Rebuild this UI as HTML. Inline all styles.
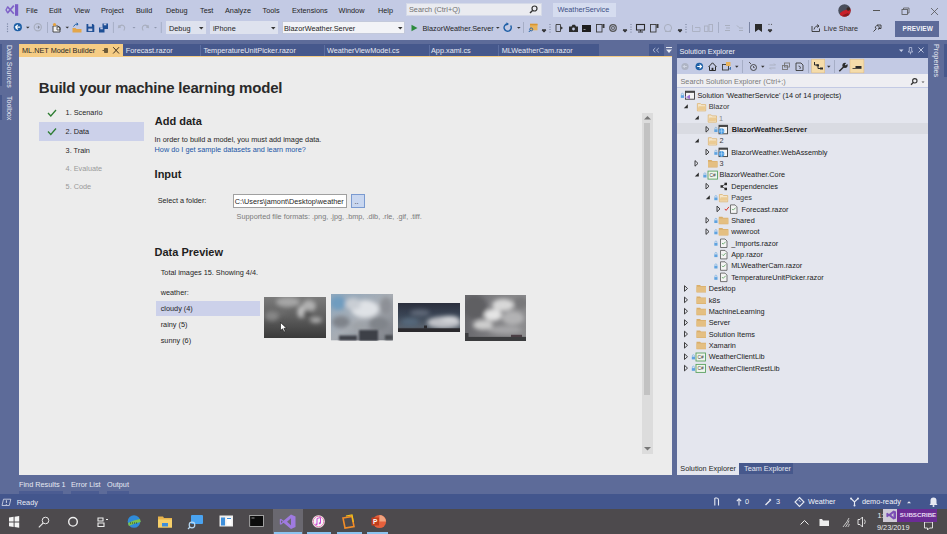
<!DOCTYPE html>
<html><head><meta charset="utf-8">
<style>
*{box-sizing:border-box}
html,body{margin:0;padding:0}
body{width:947px;height:534px;overflow:hidden;position:relative;background:#5D6B99;font-family:"Liberation Sans",sans-serif;color:#1e1e1e}
.a{position:absolute}
.t{position:absolute;white-space:nowrap;line-height:1}
.m{font-size:7.6px;color:#1e1e1e}
.mn{font-size:7.3px;color:#1e1e1e}
.u{font-size:7.3px;color:#262626}
#top{left:0;top:0;width:947px;height:40px;background:#C3CAE4}
#doc{left:19px;top:57px;width:653px;height:418px;background:#ECECEC}
#se{left:677px;top:44px;width:251px;height:418.6px;background:#E4E6EE}
#status{left:0;top:494px;width:947px;height:15px;background:#43568D}
#task{left:0;top:509px;width:947px;height:25px;background:#4D4A4D}
</style></head>
<body>
<!-- TOP BAR -->
<div id="top" class="a"></div>
<!-- VS logo -->
<svg class="a" style="left:0;top:0" width="22" height="20" viewBox="0 0 22 20">
<rect x="15" y="4.2" width="3.2" height="11.6" fill="#7A5CC6"/>
<path d="M7.3 6.5 L13.8 13.8 M7.3 13.2 L13.8 5.6" stroke="#7F62C8" stroke-width="1.7"/>
<path d="M7.6 7.2 L6 9.9 L7.6 12.6" fill="none" stroke="#7F62C8" stroke-width="1.3"/>
</svg>
<div class="t mn" style="left:26px;top:7.2px">File</div>
<div class="t mn" style="left:49px;top:7.2px">Edit</div>
<div class="t mn" style="left:74px;top:7.2px">View</div>
<div class="t mn" style="left:101px;top:7.2px">Project</div>
<div class="t mn" style="left:136px;top:7.2px">Build</div>
<div class="t mn" style="left:166px;top:7.2px">Debug</div>
<div class="t mn" style="left:200px;top:7.2px">Test</div>
<div class="t mn" style="left:225px;top:7.2px">Analyze</div>
<div class="t mn" style="left:262.5px;top:7.2px">Tools</div>
<div class="t mn" style="left:292px;top:7.2px">Extensions</div>
<div class="t mn" style="left:338.5px;top:7.2px">Window</div>
<div class="t mn" style="left:378px;top:7.2px">Help</div>
<!-- search -->
<div class="a" style="left:406px;top:3px;width:136px;height:13px;background:#EAEBF0;border:1px solid #D5DAE8"></div>
<div class="t mn" style="left:409px;top:6.4px;color:#717171">Search (Ctrl+Q)</div>
<svg class="a" style="left:529px;top:5px" width="9" height="9" viewBox="0 0 9 9"><circle cx="5.5" cy="3.5" r="2.5" fill="none" stroke="#333" stroke-width="1.2"/><path d="M3.8 5.2 L1 8" stroke="#333" stroke-width="1.4"/></svg>
<div class="a" style="left:553px;top:3px;width:63px;height:14px;background:#D5DCEF"></div>
<div class="t mn" style="left:557.5px;top:6.4px;color:#3D4F85">WeatherService</div>
<!-- avatar -->
<svg class="a" style="left:838px;top:3.5px" width="13" height="13" viewBox="0 0 13 13"><defs><clipPath id="av"><circle cx="6.5" cy="6.5" r="6.2"/></clipPath></defs>
<g clip-path="url(#av)"><rect width="13" height="13" fill="#4a4f5c"/><path d="M2 9 q3-3 7-3.5 q2-1.5 4-1 v9 h-11z" fill="#C8202A"/><circle cx="10.3" cy="5" r="1.8" fill="#3a2a25"/><path d="M4 12 q3 -2 6 -3 l3 4z" fill="#8a1a1f"/></g></svg>
<div class="a" style="left:873px;top:10px;width:7px;height:0.8px;background:#555"></div>
<svg class="a" style="left:901px;top:7px" width="9" height="9" viewBox="0 0 9 9"><rect x="1" y="2.5" width="5.5" height="5" fill="none" stroke="#555" stroke-width=".8"/><path d="M2.5 2.5 V1 H8 V6 H6.5" fill="none" stroke="#555" stroke-width=".8"/></svg>
<svg class="a" style="left:931px;top:8px" width="7" height="7" viewBox="0 0 7 7"><path d="M0 0L7 7M7 0L0 7" stroke="#555" stroke-width="0.8"/></svg>


<!-- TOOLBAR -->
<svg class="a" style="left:0;top:17px" width="947" height="23" viewBox="0 17 947 23">
<g fill="#7F8AA8"><circle cx="7.5" cy="24" r=".7"/><circle cx="7.5" cy="26.5" r=".7"/><circle cx="7.5" cy="29" r=".7"/><circle cx="7.5" cy="31.5" r=".7"/></g>
<circle cx="17.8" cy="27.2" r="4.1" fill="#1E5FA6"/><path d="M15.3 27.2 L17.8 24.9 M15.3 27.2 L17.8 29.5 M15.5 27.2 H20.2" stroke="#fff" stroke-width="1.2"/>
<path d="M26 26.7 H29.6 L27.8 28.6Z" fill="#333"/>
<circle cx="37.8" cy="27.2" r="3.6" fill="none" stroke="#A9AFBF" stroke-width="1.2"/><path d="M36 27.2 H39.5 M38.2 25.7 L39.7 27.2 L38.2 28.7" stroke="#A9AFBF" stroke-width="1"/>
<path d="M47.5 22 V33" stroke="#A6AEC6" stroke-width="1"/>
<path d="M53 26 h5 l2 2 v4 h-7z" fill="#f4f4f4" stroke="#3a3a3a" stroke-width=".9"/><circle cx="54.5" cy="24.5" r="1.6" fill="#E8A33D"/><path d="M57 27 h3 v3 h-3z" fill="none" stroke="#3a3a3a" stroke-width=".8"/>
<path d="M65.5 26.7 H69 L67.25 28.6Z" fill="#333"/>
<path d="M72.5 28 h3 l1 1 h5 v3.5 h-9z" fill="#E3A64A"/><path d="M73.5 26.5 q1.5-3 4.5-2.5 M76.5 23 l1.5 1 -1 1.5" stroke="#1E5FA6" stroke-width="1" fill="none"/>
<path d="M86.5 24 h6.5 l1.3 1.3 v6.7 h-7.8z" fill="#1E4F95"/><rect x="88.3" y="24" width="3.6" height="2.6" fill="#C3CAE4"/><rect x="88.3" y="28.6" width="4" height="2.5" fill="#C3CAE4"/>
<path d="M99 27.5 h5.5 v5 h-5.5z" fill="#1E4F95"/><path d="M102.5 23.5 h5.5 v5.5 h-5.5z" fill="#1E4F95"/><rect x="103.8" y="23.5" width="2.5" height="1.8" fill="#C3CAE4"/><rect x="100.3" y="27.5" width="2.5" height="1.8" fill="#C3CAE4"/>
<path d="M113.4 22 V33" stroke="#A6AEC6" stroke-width="1"/>
<path d="M119 25 l-0.5 2.5 l2.3 -0.4 M118.8 27.3 q2-3 4.5-1.8 q2.5 1.8 0.5 5" stroke="#A9AFBF" stroke-width="1.1" fill="none"/>
<path d="M132.5 26.9 H135.5 L134 28.5Z" fill="#8F97AD"/>
<path d="M148 25 l0.5 2.5 l-2.3 -0.4 M148.2 27.3 q-2-3 -4.5-1.8 q-2.5 1.8 -0.5 5" stroke="#A9AFBF" stroke-width="1.1" fill="none"/>
<path d="M154 26.9 H157 L155.5 28.5Z" fill="#8F97AD"/>
<path d="M161.3 22 V33" stroke="#A6AEC6" stroke-width="1"/>
<path d="M411.5 24.7 L417.5 28 L411.5 31.3Z" fill="#2C8A3E"/>
<path d="M496 26.9 H499.6 L497.8 28.7Z" fill="#333"/>
<path d="M510.6 25.5 A3.6 3.6 0 1 1 507.3 24" fill="none" stroke="#1E5FA6" stroke-width="1.4"/><path d="M506.5 22.2 L509 24 L506.5 25.8Z" fill="#1E5FA6"/>
<path d="M517 26.9 H520.6 L518.8 28.7Z" fill="#333"/>
<path d="M523.5 22 V33" stroke="#A6AEC6" stroke-width="1"/>
<rect x="530" y="23.8" width="7.5" height="6.5" fill="#E8B25A"/><rect x="530" y="23.8" width="7.5" height="1.5" fill="#D89530"/><circle cx="531.2" cy="29.4" r="1.5" fill="none" stroke="#1E5FA6" stroke-width=".9"/><path d="M530.3 30.4 L528.8 32" stroke="#1E5FA6" stroke-width="1"/>
<path d="M542 29.5 h4 M542 30.2 H546 L544 32.2Z" stroke="#222" stroke-width=".6" fill="#222"/>
<g fill="#6A738C"><circle cx="550" cy="24.5" r=".6"/><circle cx="550" cy="27" r=".6"/><circle cx="550" cy="29.5" r=".6"/><circle cx="550" cy="32" r=".6"/></g>
<path d="M556 24.5 h4.5 v7 h-4.5z" fill="none" stroke="#3a3a3a" stroke-width=".9"/><path d="M560.5 26 l2.5 2 -2.5 2z" fill="#3a3a3a"/>
<path d="M569 26.5 h2.5 l1-1.8 h2.5 l1 1.8 h2 v5.5 h-9z" fill="#2b2b2b"/><circle cx="573.5" cy="29" r="1.4" fill="#C3CAE4"/>
<rect x="582" y="25" width="9" height="7" fill="#1e1e1e"/><path d="M583.5 29.5 h2" stroke="#ddd" stroke-width=".6"/>
<rect x="596.5" y="24.5" width="5.5" height="7.5" fill="none" stroke="#3a3a3a" stroke-width=".9"/><rect x="602.5" y="24" width="2" height="4" fill="#3a3a3a"/>
<circle cx="613" cy="28" r="3.9" fill="#555"/><circle cx="613" cy="28" r="2.4" fill="none" stroke="#C3CAE4" stroke-width=".8"/><circle cx="613" cy="28" r=".9" fill="#C3CAE4"/>
<path d="M623 29.5 h4 M623 30.2 H627 L625 32.2Z" stroke="#222" stroke-width=".6" fill="#222"/>
<g fill="#6A738C"><circle cx="631" cy="24.5" r=".6"/><circle cx="631" cy="27" r=".6"/><circle cx="631" cy="29.5" r=".6"/><circle cx="631" cy="32" r=".6"/></g>
<rect x="636.5" y="24.5" width="8" height="5.5" fill="none" stroke="#2b2b2b" stroke-width="1.1"/><path d="M640.5 30 v1.5 M638 32 h5" stroke="#2b2b2b" stroke-width="1"/>
<rect x="650.5" y="24.5" width="5.5" height="7.5" fill="none" stroke="#3a3a3a" stroke-width=".9"/><rect x="656.5" y="24" width="2" height="4" fill="#3a3a3a"/>
<circle cx="668" cy="28" r="3.6" fill="none" stroke="#A9AFBF" stroke-width="1"/><path d="M665 31.5 h6" stroke="#A9AFBF" stroke-width="1"/>
<path d="M678 29.5 h4 M678 30.2 H682 L680 32.2Z" stroke="#222" stroke-width=".6" fill="#222"/>
<g fill="#6A738C"><circle cx="686" cy="24.5" r=".6"/><circle cx="686" cy="27" r=".6"/><circle cx="686" cy="29.5" r=".6"/><circle cx="686" cy="32" r=".6"/></g>
<path d="M692.5 25 v6.5 h7.5 v-4 h-5" fill="none" stroke="#A9AFBF" stroke-width=".9"/>
<rect x="704.5" y="26" width="3.5" height="5.5" fill="none" stroke="#A9AFBF" stroke-width=".9"/><rect x="709" y="24.5" width="3.5" height="7" fill="none" stroke="#A9AFBF" stroke-width=".9"/>
<path d="M718.5 22 V33" stroke="#A6AEC6" stroke-width="1"/>
<path d="M725 25.5 h5 M726 28 h4 M725 30.5 h5" stroke="#A9AFBF" stroke-width="1"/>
<path d="M737 25.5 l2 2 M739 28 h4 M739 30.5 h4" stroke="#A9AFBF" stroke-width="1"/>
<path d="M749.5 22 V33" stroke="#7A84A3" stroke-width="1"/>
<path d="M755 24 h7 v8 l-3.5 -2.5 -3.5 2.5z" fill="#2b2b2b"/>
<g fill="#555"><circle cx="769" cy="24.3" r=".6"/><circle cx="771.5" cy="24.3" r=".6"/></g>
<path d="M768 29.5 h4 M768 30.2 H772 L770 32.2Z" stroke="#222" stroke-width=".6" fill="#222"/>
<path d="M812 26 v5.5 h7.5 v-3" fill="none" stroke="#333" stroke-width=".9"/><path d="M814 29.5 q1-4 4.5-3.5 M817 24.5 l2 1.5 -1.8 1.6" fill="none" stroke="#333" stroke-width=".9"/>
<path d="M873.5 31.5 l3-3 M875.5 28.5 a2 2 0 1 1 2.5 1 M877 25 h4 v3.5 h-2.5" fill="none" stroke="#333" stroke-width=".9"/>
</svg>
<div class="t mn" style="left:422.5px;top:25.1px">BlazorWeather.Server</div>
<div class="t mn" style="left:823.7px;top:25px;font-size:7.2px;color:#2e2e2e">Live Share</div>
<div class="a" style="left:895px;top:21px;width:44px;height:15.5px;background:#5D6B99"></div>
<div class="t" style="left:902.5px;top:25.6px;font-size:6.5px;font-weight:bold;color:#F2F4FA;letter-spacing:0.05px">PREVIEW</div>

<div class="a" style="left:166px;top:21.4px;width:40px;height:13px;background:#DEE2EE"></div>
<div class="t mn" style="left:169px;top:25.1px">Debug</div>
<svg class="a" style="left:199px;top:27px" width="5" height="3"><path d="M0 0H4.5L2.25 2.5Z" fill="#333"/></svg>
<div class="a" style="left:210px;top:21.4px;width:68px;height:13px;background:#DEE2EE"></div>
<div class="t mn" style="left:213px;top:25.1px">iPhone</div>
<svg class="a" style="left:271px;top:27px" width="5" height="3"><path d="M0 0H4.5L2.25 2.5Z" fill="#333"/></svg>
<div class="a" style="left:282px;top:21.4px;width:123px;height:13px;background:#F2F3F7;border:1px solid #C3C9DB"></div>
<div class="t mn" style="left:284px;top:25.1px">BlazorWeather.Server</div>
<svg class="a" style="left:398px;top:27px" width="5" height="3"><path d="M0 0H4.5L2.25 2.5Z" fill="#333"/></svg>

<!-- TAB WELL -->
<div class="a" style="left:19px;top:44px;width:580px;height:12px;background:#46588C"></div>
<div class="a" style="left:19px;top:44px;width:104px;height:12px;background:#F5CC84"></div>
<div class="a" style="left:19px;top:56px;width:653px;height:1px;background:#F5CC84"></div>
<div class="t u" style="left:22px;top:47.1px">ML.NET Model Builder</div>
<svg class="a" style="left:100px;top:46px" width="20" height="9" viewBox="0 0 20 9"><path d="M2.5 4.5 h2 M4.5 2.5 h3 v4 h-3z" stroke="#6B5A3A" stroke-width="1" fill="#6B5A3A"/><path d="M13.2 1.2 L19 7.5 M19 1.2 L13.2 7.5" stroke="#3D3020" stroke-width="1"/></svg>
<div class="a" style="left:200px;top:45px;width:1px;height:11px;background:#5C6EA0"></div>
<div class="a" style="left:324px;top:45px;width:1px;height:11px;background:#5C6EA0"></div>
<div class="a" style="left:429px;top:45px;width:1px;height:11px;background:#5C6EA0"></div>
<div class="a" style="left:497.5px;top:45px;width:1px;height:11px;background:#5C6EA0"></div>
<div class="t u" style="left:125.7px;top:47.1px;color:#E6E9F2">Forecast.razor</div>
<div class="t u" style="left:203.4px;top:47.1px;color:#E6E9F2">TemperatureUnitPicker.razor</div>
<div class="t u" style="left:327px;top:47.1px;color:#E6E9F2">WeatherViewModel.cs</div>
<div class="t u" style="left:431px;top:47.1px;color:#E6E9F2">App.xaml.cs</div>
<div class="t u" style="left:501.7px;top:47.1px;color:#E6E9F2">MLWeatherCam.razor</div>
<div class="a" style="left:649px;top:44px;width:15px;height:12px;background:#46588C"></div>
<svg class="a" style="left:649px;top:44px" width="15" height="12" viewBox="0 0 15 12"><path d="M6.3 4 L4 6.2 L6.3 8.4 M9.8 4 L7.5 6.2 L9.8 8.4" fill="none" stroke="#C8D0E8" stroke-width=".8"/></svg>
<svg class="a" style="left:666px;top:47px" width="6" height="7" viewBox="0 0 6 7"><path d="M0 0.5 h6" stroke="#E6E9F2" stroke-width="1"/><path d="M0 2.5 H6 L3 6Z" fill="#E6E9F2"/></svg>

<!-- LEFT BAR -->
<div class="a" style="left:0;top:44px;width:2px;height:42px;background:#46588C"></div>
<div class="a" style="left:0;top:95px;width:2px;height:25px;background:#46588C"></div>
<div class="t u" style="left:12.8px;top:44.5px;font-size:7.05px;color:#E6E9F2;transform:rotate(90deg);transform-origin:0 0">Data Sources</div>
<div class="t u" style="left:12.8px;top:96.2px;font-size:7.05px;color:#E6E9F2;transform:rotate(90deg);transform-origin:0 0">Toolbox</div>

<!-- DOCUMENT -->
<div id="doc" class="a"></div>
<div class="t" style="left:38.8px;top:79.8px;font-size:15px;font-weight:bold;letter-spacing:-0.2px;color:#2a2a2a">Build your machine learning model</div>
<div class="a" style="left:39px;top:122px;width:105px;height:18.6px;background:#CCD1EA"></div>
<svg class="a" style="left:47px;top:108px" width="10" height="30" viewBox="0 0 10 30"><path d="M1 5 L3.8 8 L9 2" fill="none" stroke="#2E7D32" stroke-width="1.3"/><path d="M1 23.5 L3.8 26.5 L9 20.5" fill="none" stroke="#2E7D32" stroke-width="1.3"/></svg>
<div class="t u" style="left:65.6px;top:109.3px">1. Scenario</div>
<div class="t u" style="left:65.6px;top:128.2px">2. Data</div>
<div class="t u" style="left:65.6px;top:146.6px">3. Train</div>
<div class="t u" style="left:65.6px;top:165.2px;color:#9A9A9A">4. Evaluate</div>
<div class="t u" style="left:65.6px;top:183.4px;color:#9A9A9A">5. Code</div>

<div class="t" style="left:154.8px;top:115.5px;font-size:11px;font-weight:bold;color:#1e1e1e">Add data</div>
<div class="t u" style="left:154.6px;top:136.3px">In order to build a model, you must add image data.</div>
<div class="t u" style="left:154.6px;top:145.8px;color:#1A56A6">How do I get sample datasets and learn more?</div>
<div class="t" style="left:154.6px;top:168.5px;font-size:11px;font-weight:bold;color:#1e1e1e">Input</div>
<div class="t u" style="left:157.7px;top:197.4px">Select a folder:</div>
<div class="a" style="left:232.7px;top:194.3px;width:114px;height:13.7px;background:#fff;border:1px solid #A0A0A0"></div>
<div class="a" style="left:233.7px;top:195.3px;width:112px;height:11.7px;overflow:hidden"><div class="t u" style="left:1px;top:2.4px">C:\Users\jamont\Desktop\weather</div></div>
<div class="a" style="left:350.5px;top:193.5px;width:14px;height:14.5px;background:#C9D7F0;border:1px solid #7A9AD0"></div>
<div class="t u" style="left:354.5px;top:197.5px">..</div>
<div class="t u" style="left:236.6px;top:213.4px;color:#7A7A7A">Supported file formats: .png, .jpg, .bmp, .dib, .rle, .gif, .tiff.</div>

<div class="t" style="left:154.5px;top:246.7px;font-size:11px;font-weight:bold;color:#1e1e1e">Data Preview</div>
<div class="t u" style="left:160.7px;top:268.6px">Total images 15. Showing 4/4.</div>
<div class="t u" style="left:160.7px;top:288.6px">weather:</div>
<div class="a" style="left:156.2px;top:300.8px;width:104px;height:15px;background:#CCD1EA"></div>
<div class="t u" style="left:160.7px;top:304.7px">cloudy (4)</div>
<div class="t u" style="left:160.7px;top:320.6px">rainy (5)</div>
<div class="t u" style="left:160.7px;top:337.1px">sunny (6)</div>

<svg class="a" style="left:264px;top:296.7px" width="62" height="41.3" viewBox="0 0 62 41.3">
<defs><filter id="bl" x="-20%" y="-20%" width="140%" height="140%"><feGaussianBlur stdDeviation="2.2"/></filter>
<filter id="bl2" x="-20%" y="-20%" width="140%" height="140%"><feGaussianBlur stdDeviation="1.2"/></filter>
<linearGradient id="g1" x1="0" y1="0" x2="0" y2="1"><stop offset="0" stop-color="#7a7a7a"/><stop offset=".45" stop-color="#606060"/><stop offset="1" stop-color="#393939"/></linearGradient>
<clipPath id="c1"><rect width="62" height="41.3"/></clipPath>
</defs>
<rect width="62" height="41.3" fill="url(#g1)"/>
<g clip-path="url(#c1)" filter="url(#bl)">
<ellipse cx="24" cy="5" rx="12" ry="5" fill="#a6a6a6"/>
<ellipse cx="45" cy="9" rx="7" ry="6" fill="#b0b0b0"/>
<ellipse cx="37" cy="15" rx="3.5" ry="6" fill="#c2c2c2"/>
<ellipse cx="52" cy="23" rx="6" ry="3" fill="#aaaaaa"/>
<ellipse cx="8" cy="19" rx="7" ry="5" fill="#868686"/>
<ellipse cx="44" cy="17" rx="5" ry="4" fill="#565656"/>
<ellipse cx="18" cy="14" rx="5" ry="4" fill="#6a6a6a"/>
</g>
</svg>
<svg class="a" style="left:331px;top:294.4px" width="62" height="46.3" viewBox="0 0 62 46.3">
<defs><clipPath id="c2"><rect width="62" height="46.3"/></clipPath>
<linearGradient id="g2" x1="0" y1="0" x2="1" y2="1"><stop offset="0" stop-color="#8fa8be"/><stop offset=".5" stop-color="#a8adb4"/><stop offset="1" stop-color="#7a7d84"/></linearGradient></defs>
<rect width="62" height="46.3" fill="url(#g2)"/>
<g clip-path="url(#c2)" filter="url(#bl)">
<ellipse cx="7" cy="9" rx="8" ry="7" fill="#6f9cbf"/>
<ellipse cx="34" cy="15" rx="14" ry="9" fill="#dfe2e6"/>
<ellipse cx="22" cy="10" rx="8" ry="6" fill="#c9ced4"/>
<ellipse cx="55" cy="12" rx="6" ry="9" fill="#8d9096"/>
<ellipse cx="10" cy="28" rx="9" ry="6" fill="#7f838a"/>
<ellipse cx="48" cy="30" rx="10" ry="7" fill="#80848a"/>
<ellipse cx="28" cy="32" rx="8" ry="4" fill="#9ea3a8"/>
</g>
<g filter="url(#bl2)"><rect x="28" y="36" width="19" height="11" fill="#3c3f46"/><rect x="8" y="41.5" width="18" height="5" fill="#40434a"/><rect x="54" y="41" width="8" height="5" fill="#4a4d52"/></g>
</svg>
<svg class="a" style="left:398px;top:303px" width="62" height="29" viewBox="0 0 62 29">
<defs><clipPath id="c3"><rect width="62" height="29"/></clipPath>
<linearGradient id="g3" x1="0" y1="0" x2="0" y2="1"><stop offset="0" stop-color="#2b2f3d"/><stop offset=".45" stop-color="#3b4656"/><stop offset=".8" stop-color="#56606c"/><stop offset="1" stop-color="#4a4e56"/></linearGradient></defs>
<rect width="62" height="29" fill="url(#g3)"/>
<g clip-path="url(#c3)" filter="url(#bl)">
<ellipse cx="46" cy="19.5" rx="17" ry="6" fill="#bfc1c7"/>
<ellipse cx="52" cy="16" rx="9" ry="3" fill="#d5d7db"/>
<ellipse cx="22" cy="10" rx="10" ry="3.5" fill="#5d6676"/>
<ellipse cx="12" cy="19" rx="9" ry="4" fill="#55677a"/>
</g>
<rect x="0" y="25.3" width="62" height="3.7" fill="#2b2a2e"/>
<rect x="26" y="22.5" width="3" height="3" fill="#2b2a2e"/>
</svg>
<svg class="a" style="left:464.8px;top:294.7px" width="61.4" height="46.3" viewBox="0 0 61.4 46.3">
<defs><clipPath id="c4"><rect width="61.4" height="46.3"/></clipPath>
<linearGradient id="g4" x1="0" y1="0" x2="1" y2="0"><stop offset="0" stop-color="#68686c"/><stop offset=".5" stop-color="#808083"/><stop offset="1" stop-color="#8c8c8e"/></linearGradient></defs>
<rect width="61.4" height="46.3" fill="url(#g4)"/>
<g clip-path="url(#c4)" filter="url(#bl)">
<ellipse cx="10" cy="12" rx="12" ry="12" fill="#5e5e62"/>
<ellipse cx="56" cy="8" rx="8" ry="6" fill="#78787a"/>
<ellipse cx="48" cy="23" rx="11" ry="7" fill="#b2b2b4"/>
<ellipse cx="38" cy="10" rx="11" ry="6" fill="#d8d8d8"/>
<ellipse cx="28" cy="20" rx="9" ry="6" fill="#e4e4e4"/>
<ellipse cx="18" cy="30" rx="10" ry="5" fill="#cdcdcd"/>
<ellipse cx="40" cy="35" rx="17" ry="4" fill="#a6a6a8"/>
</g>
<rect x="0" y="41.9" width="61.4" height="4.4" fill="#3b3c3e"/>
<rect x="0" y="38" width="3.5" height="4" fill="#3b3c3e"/><rect x="46" y="39.8" width="11" height="2.2" fill="#4a3e44"/>
</svg>
<svg class="a" style="left:279.5px;top:321.5px" width="8" height="11" viewBox="0 0 8 11"><path d="M0.5 0.5 L0.5 8.5 L2.5 6.8 L4 10 L5.3 9.4 L3.9 6.3 L6.6 6.2Z" fill="#fff" stroke="#111" stroke-width=".6"/></svg>
<div class="a" style="left:642px;top:113px;width:10.5px;height:341px;background:#DCDCDC"></div>
<div class="a" style="left:644.2px;top:122.5px;width:5.8px;height:272.5px;background:#C2C2C2"></div>
<svg class="a" style="left:643px;top:115px" width="9" height="6"><path d="M1 4.5 H8 L4.5 1Z" fill="#777"/></svg>
<svg class="a" style="left:643px;top:446px" width="9" height="6"><path d="M1 1 H8 L4.5 4.5Z" fill="#777"/></svg>

<!-- SOLUTION EXPLORER -->
<div id="se" class="a"></div>
<div class="a" style="left:677px;top:44px;width:251px;height:13.8px;background:#46588C"></div>
<div class="t u" style="left:679.4px;top:48.2px;color:#F0F2F8">Solution Explorer</div>
<svg class="a" style="left:890px;top:44px" width="38" height="14" viewBox="890 44 38 14">
<path d="M899 49.5 H903.5 L901.25 52Z" fill="#C8D0E8"/>
<path d="M909.3 47.5 h2.4 v3.8 h0.8 v0.8 h-4 v-0.8 h0.8z M910.5 52.1 v2.2" fill="none" stroke="#C8D0E8" stroke-width=".7"/>
<path d="M918.5 47.5 L923.5 52.5 M923.5 47.5 L918.5 52.5" stroke="#C8D0E8" stroke-width=".9"/>
</svg>
<div class="a" style="left:677px;top:57.8px;width:251px;height:16.5px;background:#C3CAE4"></div>
<svg class="a" style="left:677px;top:57px" width="251" height="18" viewBox="677 57 251 18">
<circle cx="685" cy="66.5" r="3.6" fill="#AEB4C4"/><path d="M686.8 66.5 H683.3 M684.8 65 L683.3 66.5 L684.8 68" stroke="#D5DAE8" stroke-width=".9" fill="none"/>
<circle cx="699.3" cy="66.5" r="3.8" fill="#1E5FA6"/><path d="M697.2 66.5 H701.2 M699.6 64.6 L701.5 66.5 L699.6 68.4" stroke="#fff" stroke-width="1.1" fill="none"/>
<path d="M708.5 67 L712.5 62.8 L716.5 67 M709.5 66.5 V70.5 H715.5 V66.5" fill="none" stroke="#2b2b2b" stroke-width="1"/><rect x="711.6" y="67.8" width="1.8" height="2.7" fill="#2b2b2b"/>
<rect x="722.5" y="64.5" width="6" height="5.5" fill="none" stroke="#3a3a3a" stroke-width=".9"/><rect x="726" y="62" width="4.5" height="4" fill="#E8B25A"/><path d="M730.5 67 v2.5 l-1.5 -1" stroke="#1E5FA6" stroke-width=".8" fill="none"/>
<path d="M735 65.8 H738.5 L736.75 67.8Z" fill="#333"/>
<path d="M742.5 60 V73" stroke="#A6AEC6" stroke-width="1"/>
<circle cx="753.5" cy="67.5" r="3" fill="none" stroke="#3a3a3a" stroke-width=".9"/><path d="M753.5 66 v1.6 h1.2 M749 62 l2 2" stroke="#3a3a3a" stroke-width=".8" fill="none"/>
<path d="M761 65.8 H764.5 L762.75 67.8Z" fill="#333"/>
<path d="M769.5 65 h6 l-1.5 -1.5 M775.5 68 h-6 l1.5 1.5" stroke="#A9AFBF" stroke-width=".9" fill="none"/>
<rect x="782.5" y="65.5" width="5" height="4" fill="none" stroke="#777" stroke-width=".9"/><rect x="784.5" y="63" width="5" height="4" fill="none" stroke="#777" stroke-width=".9"/>
<path d="M796 63 h5 l2 2 v5.5 h-7z" fill="none" stroke="#3a3a3a" stroke-width=".9"/><path d="M798.5 66 q2 0 2 2 l-1 1" stroke="#3a3a3a" stroke-width=".8" fill="none"/>
<path d="M808.5 60 V73" stroke="#A6AEC6" stroke-width="1"/>
<rect x="811.7" y="59.2" width="13" height="13.7" fill="#F5DCAA" stroke="#E0BE85" stroke-width=".6"/>
<path d="M814.5 62 v3 h3.5 v3.5 h3" fill="none" stroke="#2b2b2b" stroke-width="1"/><rect x="816.5" y="64.3" width="2.5" height="2" fill="#2b2b2b"/><rect x="820" y="67.5" width="3" height="2" fill="#2b2b2b"/>
<path d="M827 65.8 H830.5 L828.75 67.8Z" fill="#333"/>
<path d="M834.5 60 V73" stroke="#A6AEC6" stroke-width="1"/>
<path d="M839.3 71.3 L843.8 66.8" stroke="#2b2b2b" stroke-width="1.5"/><circle cx="845" cy="65.3" r="2.6" fill="#2b2b2b"/><path d="M845.3 65 L847.8 62.5" stroke="#C3CAE4" stroke-width="1.3"/>
<rect x="850" y="59.2" width="13.9" height="13.7" fill="#F5DCAA" stroke="#E0BE85" stroke-width=".6"/>
<path d="M852.5 68.5 h9" stroke="#2b2b2b" stroke-width=".8"/><rect x="855.5" y="66" width="6" height="2" fill="#2b2b2b"/>
</svg>
<div class="a" style="left:677px;top:74.3px;width:251px;height:13px;background:#EEEEF2"></div>
<div class="t u" style="left:680.5px;top:78px;color:#7a7a7a">Search Solution Explorer (Ctrl+;)</div>
<svg class="a" style="left:908px;top:77px" width="20" height="9" viewBox="908 77 20 9"><circle cx="914.8" cy="80.8" r="2.2" fill="none" stroke="#333" stroke-width="1.1"/><path d="M913.2 82.5 L911 84.7" stroke="#333" stroke-width="1.3"/><path d="M921.5 81.5 H924.5 L923 83Z" fill="#555"/></svg>
<div class="a" style="left:677px;top:87.3px;width:251px;height:1.2px;background:#C3CAE4"></div>
<div class="a" style="left:944px;top:44px;width:3px;height:33px;background:#46588C"></div>
<div class="t u" style="left:940.3px;top:43.8px;color:#E6E9F2;transform:rotate(90deg);transform-origin:0 0">Properties</div>

<!-- TREE -->
<div class="a" style="left:677px;top:122.6px;width:251px;height:11.6px;background:#D9DBE2"></div>
<svg class="a" style="left:0;top:0" width="947" height="534" viewBox="0 0 947 534">
<path d="M681.4 95.2 v-1 a1 1 0 0 1 2 0 v1" fill="none" stroke="#6AAAE0" stroke-width=".6"/><rect x="680.8" y="95.2" width="3.2" height="2.7" fill="#5FA3E0"/>
<rect x="685.5" y="91.2" width="9" height="8" fill="#F4F4F4" stroke="#3a3a3a" stroke-width=".9"/><rect x="685.5" y="91.2" width="9" height="1.6" fill="#3a3a3a"/><path d="M685.0 95.7 l1.5 1.5 l1.5 -1.5 l2 -1 v4.5 l-2 -1 l-1.5 -1.5 l-1.5 1.5z" fill="#9B6FD0"/>
<path d="M687.8 104.3 V108.3 H683.8Z" fill="#2b2b2b"/>
<path d="M697.4 103.6 h3 l1 1 h4.3 v6.3 h-8.3z" fill="#F4E6CC" stroke="#DDB574" stroke-width=".8"/><path d="M697.4 109.9 l1.3 -3.6 h7.3 l-1.3 3.6z" fill="#EBCB94"/>
<path d="M698.8 115.6 V119.6 H694.8Z" fill="#2b2b2b"/>
<path d="M708.2 114.9 h3 l1 1 h4.3 v6.3 h-8.3z" fill="#F4E6CC" stroke="#DDB574" stroke-width=".8"/><path d="M708.2 121.2 l1.3 -3.6 h7.3 l-1.3 3.6z" fill="#EBCB94"/>
<path d="M706.0 126.5 L709.0 129.3 L706.0 132.1Z" fill="none" stroke="#2b2b2b" stroke-width="0.9"/>
<path d="M714.9 129.3 v-1 a1 1 0 0 1 2 0 v1" fill="none" stroke="#6AAAE0" stroke-width=".6"/><rect x="714.3" y="129.3" width="3.2" height="2.7" fill="#5FA3E0"/>
<rect x="719.0" y="125.3" width="8.5" height="8.5" fill="#F4F4F4" stroke="#3a3a3a" stroke-width=".9"/><rect x="719.0" y="125.3" width="8.5" height="1.6" fill="#3a3a3a"/><circle cx="721.5" cy="131.1" r="2.8" fill="#4A9BE0"/><path d="M719.0 131.1 h5 M721.5 128.3 v5.5" stroke="#CFE6FA" stroke-width=".5"/>
<path d="M698.8 138.4 V142.4 H694.8Z" fill="#2b2b2b"/>
<path d="M708.4 137.7 h3 l1 1 h4.3 v6.3 h-8.3z" fill="#F4E6CC" stroke="#DDB574" stroke-width=".8"/><path d="M708.4 144.0 l1.3 -3.6 h7.3 l-1.3 3.6z" fill="#EBCB94"/>
<path d="M706.0 149.2 L709.0 152.1 L706.0 154.9Z" fill="none" stroke="#2b2b2b" stroke-width="0.9"/>
<path d="M714.9 152.1 v-1 a1 1 0 0 1 2 0 v1" fill="none" stroke="#6AAAE0" stroke-width=".6"/><rect x="714.3" y="152.1" width="3.2" height="2.7" fill="#5FA3E0"/>
<rect x="719.0" y="148.1" width="8.5" height="8.5" fill="#F4F4F4" stroke="#3a3a3a" stroke-width=".9"/><rect x="719.0" y="148.1" width="8.5" height="1.6" fill="#3a3a3a"/><circle cx="721.5" cy="153.9" r="2.8" fill="#4A9BE0"/><path d="M719.0 153.9 h5 M721.5 151.1 v5.5" stroke="#CFE6FA" stroke-width=".5"/>
<path d="M695.0 160.6 L698.0 163.4 L695.0 166.2Z" fill="none" stroke="#2b2b2b" stroke-width="0.9"/>
<path d="M708.0 159.9 h3.5 l1 1 h5 v6.5 h-9.5z" fill="#D9AE6A"/><rect x="708.0" y="161.6" width="9.5" height="5.3" fill="#E4BF82"/>
<path d="M698.8 172.5 V176.5 H694.8Z" fill="#2b2b2b"/>
<path d="M703.9 174.8 v-1 a1 1 0 0 1 2 0 v1" fill="none" stroke="#6AAAE0" stroke-width=".6"/><rect x="703.3" y="174.8" width="3.2" height="2.7" fill="#5FA3E0"/>
<rect x="708.0" y="171.1" width="9.5" height="8" fill="#EFF5EC" stroke="#5AA060" stroke-width=".9"/><text x="709.5" y="177.1" font-family="Liberation Sans" font-size="4.8" fill="#444">C#</text>
<path d="M706.0 183.4 L709.0 186.2 L706.0 189.0Z" fill="none" stroke="#2b2b2b" stroke-width="0.9"/>
<rect x="720.5" y="185.2" width="2.5" height="2.5" fill="#2b2b2b"/><rect x="724.5" y="182.7" width="2.5" height="2.5" fill="#2b2b2b"/><rect x="724.5" y="187.7" width="2.5" height="2.5" fill="#2b2b2b"/><path d="M722.5 186.2 L725.0 184.2 M722.5 186.7 L725.0 188.7" stroke="#2b2b2b" stroke-width=".7"/>
<path d="M709.8 195.2 V199.2 H705.8Z" fill="#2b2b2b"/>
<path d="M714.9 197.5 v-1 a1 1 0 0 1 2 0 v1" fill="none" stroke="#6AAAE0" stroke-width=".6"/><rect x="714.3" y="197.5" width="3.2" height="2.7" fill="#5FA3E0"/>
<path d="M719.4 194.5 h3 l1 1 h4.3 v6.3 h-8.3z" fill="#F4E6CC" stroke="#DDB574" stroke-width=".8"/><path d="M719.4 200.8 l1.3 -3.6 h7.3 l-1.3 3.6z" fill="#EBCB94"/>
<path d="M717.0 206.1 L720.0 208.9 L717.0 211.7Z" fill="none" stroke="#2b2b2b" stroke-width="0.9"/>
<path d="M724.8 208.9 l1.3 1.5 l2.8 -3.5" stroke="#D9322C" stroke-width="1" fill="none"/>
<path d="M730.5 204.9 h4.5 l2 2 v6.5 h-6.5z" fill="#F4F4F4" stroke="#555" stroke-width=".8"/><path d="M732.0 208.9 l1.2 1.2 l2.5 -2.5" stroke="#4E9A56" stroke-width=".8" fill="none"/>
<path d="M706.0 217.5 L709.0 220.3 L706.0 223.1Z" fill="none" stroke="#2b2b2b" stroke-width="0.9"/>
<path d="M714.9 220.3 v-1 a1 1 0 0 1 2 0 v1" fill="none" stroke="#6AAAE0" stroke-width=".6"/><rect x="714.3" y="220.3" width="3.2" height="2.7" fill="#5FA3E0"/>
<path d="M718.8 216.8 h3.5 l1 1 h5 v6.5 h-9.5z" fill="#D9AE6A"/><rect x="718.8" y="218.5" width="9.5" height="5.3" fill="#E4BF82"/>
<path d="M706.0 228.8 L709.0 231.6 L706.0 234.4Z" fill="none" stroke="#2b2b2b" stroke-width="0.9"/>
<path d="M714.9 231.6 v-1 a1 1 0 0 1 2 0 v1" fill="none" stroke="#6AAAE0" stroke-width=".6"/><rect x="714.3" y="231.6" width="3.2" height="2.7" fill="#5FA3E0"/>
<path d="M718.8 228.1 h3.5 l1 1 h5 v6.5 h-9.5z" fill="#D9AE6A"/><rect x="718.8" y="229.8" width="9.5" height="5.3" fill="#E4BF82"/>
<path d="M714.9 243.0 v-1 a1 1 0 0 1 2 0 v1" fill="none" stroke="#6AAAE0" stroke-width=".6"/><rect x="714.3" y="243.0" width="3.2" height="2.7" fill="#5FA3E0"/>
<path d="M720.5 239.0 h4.5 l2 2 v6.5 h-6.5z" fill="#F4F4F4" stroke="#555" stroke-width=".8"/><path d="M722.0 243.0 l1.2 1.2 l2.5 -2.5" stroke="#4E9A56" stroke-width=".8" fill="none"/>
<path d="M714.9 254.4 v-1 a1 1 0 0 1 2 0 v1" fill="none" stroke="#6AAAE0" stroke-width=".6"/><rect x="714.3" y="254.4" width="3.2" height="2.7" fill="#5FA3E0"/>
<path d="M720.5 250.4 h4.5 l2 2 v6.5 h-6.5z" fill="#F4F4F4" stroke="#555" stroke-width=".8"/><path d="M722.0 254.4 l1.2 1.2 l2.5 -2.5" stroke="#4E9A56" stroke-width=".8" fill="none"/>
<path d="M714.9 265.8 v-1 a1 1 0 0 1 2 0 v1" fill="none" stroke="#6AAAE0" stroke-width=".6"/><rect x="714.3" y="265.8" width="3.2" height="2.7" fill="#5FA3E0"/>
<path d="M720.5 261.8 h4.5 l2 2 v6.5 h-6.5z" fill="#F4F4F4" stroke="#555" stroke-width=".8"/><path d="M722.0 265.8 l1.2 1.2 l2.5 -2.5" stroke="#4E9A56" stroke-width=".8" fill="none"/>
<path d="M714.9 277.1 v-1 a1 1 0 0 1 2 0 v1" fill="none" stroke="#6AAAE0" stroke-width=".6"/><rect x="714.3" y="277.1" width="3.2" height="2.7" fill="#5FA3E0"/>
<path d="M720.5 273.1 h4.5 l2 2 v6.5 h-6.5z" fill="#F4F4F4" stroke="#555" stroke-width=".8"/><path d="M722.0 277.1 l1.2 1.2 l2.5 -2.5" stroke="#4E9A56" stroke-width=".8" fill="none"/>
<path d="M684.5 285.7 L687.5 288.5 L684.5 291.3Z" fill="none" stroke="#2b2b2b" stroke-width="0.9"/>
<path d="M696.5 285.0 h3.5 l1 1 h5 v6.5 h-9.5z" fill="#D9AE6A"/><rect x="696.5" y="286.7" width="9.5" height="5.3" fill="#E4BF82"/>
<path d="M684.5 297.1 L687.5 299.9 L684.5 302.7Z" fill="none" stroke="#2b2b2b" stroke-width="0.9"/>
<path d="M696.5 296.4 h3.5 l1 1 h5 v6.5 h-9.5z" fill="#D9AE6A"/><rect x="696.5" y="298.1" width="9.5" height="5.3" fill="#E4BF82"/>
<path d="M684.5 308.4 L687.5 311.2 L684.5 314.0Z" fill="none" stroke="#2b2b2b" stroke-width="0.9"/>
<path d="M696.5 307.7 h3.5 l1 1 h5 v6.5 h-9.5z" fill="#D9AE6A"/><rect x="696.5" y="309.4" width="9.5" height="5.3" fill="#E4BF82"/>
<path d="M684.5 319.8 L687.5 322.6 L684.5 325.4Z" fill="none" stroke="#2b2b2b" stroke-width="0.9"/>
<path d="M696.5 319.1 h3.5 l1 1 h5 v6.5 h-9.5z" fill="#D9AE6A"/><rect x="696.5" y="320.8" width="9.5" height="5.3" fill="#E4BF82"/>
<path d="M684.5 331.2 L687.5 334.0 L684.5 336.8Z" fill="none" stroke="#2b2b2b" stroke-width="0.9"/>
<path d="M696.5 330.5 h3.5 l1 1 h5 v6.5 h-9.5z" fill="#D9AE6A"/><rect x="696.5" y="332.2" width="9.5" height="5.3" fill="#E4BF82"/>
<path d="M684.5 342.5 L687.5 345.3 L684.5 348.1Z" fill="none" stroke="#2b2b2b" stroke-width="0.9"/>
<path d="M696.5 341.8 h3.5 l1 1 h5 v6.5 h-9.5z" fill="#D9AE6A"/><rect x="696.5" y="343.5" width="9.5" height="5.3" fill="#E4BF82"/>
<path d="M684.5 353.9 L687.5 356.7 L684.5 359.5Z" fill="none" stroke="#2b2b2b" stroke-width="0.9"/>
<path d="M692.4 356.7 v-1 a1 1 0 0 1 2 0 v1" fill="none" stroke="#6AAAE0" stroke-width=".6"/><rect x="691.8" y="356.7" width="3.2" height="2.7" fill="#5FA3E0"/>
<rect x="696.0" y="353.0" width="9.5" height="8" fill="#EFF5EC" stroke="#5AA060" stroke-width=".9"/><text x="697.5" y="359.0" font-family="Liberation Sans" font-size="4.8" fill="#444">C#</text>
<path d="M684.5 365.3 L687.5 368.1 L684.5 370.9Z" fill="none" stroke="#2b2b2b" stroke-width="0.9"/>
<path d="M692.4 368.1 v-1 a1 1 0 0 1 2 0 v1" fill="none" stroke="#6AAAE0" stroke-width=".6"/><rect x="691.8" y="368.1" width="3.2" height="2.7" fill="#5FA3E0"/>
<rect x="696.0" y="364.4" width="9.5" height="8" fill="#EFF5EC" stroke="#5AA060" stroke-width=".9"/><text x="697.5" y="370.4" font-family="Liberation Sans" font-size="4.8" fill="#444">C#</text>
</svg>
<div class="t u" style="left:697.5px;top:91.8px;color:#222;">Solution 'WeatherService' (14 of 14 projects)</div>
<div class="t u" style="left:708.7px;top:103.2px;color:#3a3a3a;">Blazor</div>
<div class="t u" style="left:719px;top:114.5px;color:#8a8a8a;">1</div>
<div class="t u" style="left:731.7px;top:125.9px;color:#222;font-weight:bold;">BlazorWeather.Server</div>
<div class="t u" style="left:719.4px;top:137.3px;color:#3a3a3a;">2</div>
<div class="t u" style="left:731.2px;top:148.7px;color:#222;">BlazorWeather.WebAssembly</div>
<div class="t u" style="left:719.4px;top:160.0px;color:#3a3a3a;">3</div>
<div class="t u" style="left:719.6px;top:171.4px;color:#222;">BlazorWeather.Core</div>
<div class="t u" style="left:731.2px;top:182.8px;color:#222;">Dependencies</div>
<div class="t u" style="left:731.2px;top:194.1px;color:#3a3a3a;">Pages</div>
<div class="t u" style="left:741.5px;top:205.5px;color:#222;">Forecast.razor</div>
<div class="t u" style="left:731.2px;top:216.9px;color:#222;">Shared</div>
<div class="t u" style="left:731.2px;top:228.2px;color:#222;">wwwroot</div>
<div class="t u" style="left:731.2px;top:239.6px;color:#222;">_Imports.razor</div>
<div class="t u" style="left:731.2px;top:251.0px;color:#222;">App.razor</div>
<div class="t u" style="left:731.2px;top:262.4px;color:#222;">MLWeatherCam.razor</div>
<div class="t u" style="left:731.2px;top:273.7px;color:#222;">TemperatureUnitPicker.razor</div>
<div class="t u" style="left:708.7px;top:285.1px;color:#222;">Desktop</div>
<div class="t u" style="left:708.7px;top:296.5px;color:#222;">k8s</div>
<div class="t u" style="left:708.7px;top:307.8px;color:#222;">MachineLearning</div>
<div class="t u" style="left:708.7px;top:319.2px;color:#222;">Server</div>
<div class="t u" style="left:708.7px;top:330.6px;color:#222;">Solution Items</div>
<div class="t u" style="left:708.7px;top:341.9px;color:#222;">Xamarin</div>
<div class="t u" style="left:708.8px;top:353.3px;color:#222;">WeatherClientLib</div>
<div class="t u" style="left:708.8px;top:364.7px;color:#222;">WeatherClientRestLib</div>
<!-- TREE END -->
<div class="a" style="left:739.4px;top:463.4px;width:53.6px;height:10.2px;background:#46588C"></div>
<div class="a" style="left:677px;top:462px;width:62.4px;height:13px;background:#E4E6EE"></div>
<div class="t u" style="left:680.3px;top:465.2px">Solution Explorer</div>
<div class="t u" style="left:744px;top:465.2px;color:#E6E9F2">Team Explorer</div>

<!-- BOTTOM TABS -->
<div class="t u" style="left:19px;top:480.5px;color:#E6E9F2">Find Results 1</div>
<div class="t u" style="left:71px;top:480.5px;color:#E6E9F2">Error List</div>
<div class="t u" style="left:107px;top:480.5px;color:#E6E9F2">Output</div>
<div class="a" style="left:19px;top:490.6px;width:44px;height:3.4px;background:#4B5C92"></div>
<div class="a" style="left:71px;top:490.6px;width:28px;height:3.4px;background:#4B5C92"></div>
<div class="a" style="left:107px;top:490.6px;width:22px;height:3.4px;background:#4B5C92"></div>
<!-- STATUS -->
<div id="status" class="a"></div>
<svg class="a" style="left:0;top:494px" width="947" height="15" viewBox="0 494 947 15">
<path d="M2 505.5 l1.5 -6.3 h7.3 l-1.5 6.3z" fill="none" stroke="#D8DCEA" stroke-width=".8"/><path d="M6.4 500.3 v2.6 M6.3 504 v.8" stroke="#E6E9F2" stroke-width=".9"/>
<path d="M714.8 498 v7.5 M718.5 500 v5.5 M714.8 498 l2 0 q1.7 0 1.7 2" fill="none" stroke="#E6E9F2" stroke-width="1.1"/>
<path d="M739 505.5 v-6.5 M736.8 501.2 L739 498.8 L741.2 501.2" fill="none" stroke="#E6E9F2" stroke-width="1.1"/>
<path d="M765.5 505 l5 -5 M769.5 499 l1.5 1.5" fill="none" stroke="#E6E9F2" stroke-width="1.4"/>
<path d="M799.5 497.5 l4.5 4.5 -4.5 4.5 -4.5 -4.5z" fill="none" stroke="#E6E9F2" stroke-width="1.1"/><path d="M798.8 500 l1.8 2" stroke="#E6E9F2" stroke-width=".8"/>
<path d="M851 498.5 l3.5 3.5 l3.5 -3.5 M854.5 502 v3.5" fill="none" stroke="#E6E9F2" stroke-width="1.1"/><circle cx="851" cy="498.5" r="1" fill="#E6E9F2"/><circle cx="858" cy="498.5" r="1" fill="#E6E9F2"/><circle cx="854.5" cy="505.5" r="1" fill="#E6E9F2"/>
<path d="M907 503.2 h4 l-2 -2z" fill="#E6E9F2"/>
<path d="M929.5 505 h8 l-1 -1.5 v-3 a3 3 0 0 0 -6 0 v3z" fill="#E6E9F2"/><circle cx="933.5" cy="506" r="1" fill="#E6E9F2"/>
</svg>
<div class="t u" style="left:16.8px;top:498.6px;color:#E8EBF4">Ready</div>
<div class="t u" style="left:745px;top:498px;color:#F0F2F8">0</div>
<div class="t u" style="left:776px;top:498px;color:#F0F2F8">3</div>
<div class="t u" style="left:808px;top:498px;color:#F0F2F8">Weather</div>
<div class="t u" style="left:862px;top:498px;color:#F0F2F8">demo-ready</div>
<!-- TASKBAR -->
<div id="task" class="a"></div>
<div class="a" style="left:273px;top:509px;width:30px;height:25px;background:#6A6870"></div>
<div class="a" style="left:274px;top:532.3px;width:28px;height:1.7px;background:#8CC4F0"></div>
<div class="a" style="left:306.5px;top:532.3px;width:24.5px;height:1.7px;background:#8CC4F0"></div>
<div class="a" style="left:336.8px;top:532.3px;width:25.5px;height:1.7px;background:#8CC4F0"></div>
<div class="a" style="left:367px;top:532.3px;width:21px;height:1.7px;background:#8CC4F0"></div>
<svg class="a" style="left:0;top:509px" width="947" height="25" viewBox="0 509 947 25">
<path d="M9 517.5 l4.6 -.7 v4.6 h-4.6z M14.6 516.7 l4.6 -.7 v5.4 h-4.6z M9 522.4 h4.6 v4.6 l-4.6 -.7z M14.6 522.4 h4.6 v5.4 l-4.6 -.7z" fill="#F4F4F4"/>
<circle cx="45.5" cy="520.5" r="3.3" fill="none" stroke="#E8E8E8" stroke-width="1"/><path d="M43.2 523 L38.8 527.3" stroke="#E8E8E8" stroke-width="1.1"/>
<circle cx="73" cy="521.8" r="4.3" fill="none" stroke="#F0F0F0" stroke-width="1.4"/>
<path d="M98 518 h5 v3 h-5z M98 523 h6 v3.5 h-6z M106 519.5 h2" fill="none" stroke="#EDEDED" stroke-width="1.1"/>
<circle cx="134" cy="521.5" r="6.3" fill="#2F8BD9"/><path d="M128 523 q6 -3 12 -4 l0.8 3 q-6 1 -12 4z" fill="#7CC24C"/><path d="M130 523 h8" stroke="#222" stroke-width=".8" stroke-dasharray="1 1"/>
<path d="M158 516.5 h5 l1 1.5 h8 v9.5 h-14z" fill="#E9B44C"/><rect x="158" y="519.5" width="14" height="8" fill="#F6D06A"/><rect x="162" y="523" width="6" height="3.5" fill="#3D8FDB"/>
<rect x="191" y="515" width="12" height="9" rx="1" fill="#4AA3F0"/><circle cx="192" cy="525" r="2.8" fill="none" stroke="#B8D8F2" stroke-width="1.2"/><path d="M190 527 l-2 2" stroke="#B8D8F2" stroke-width="1.2"/>
<rect x="219.5" y="515.5" width="13.5" height="11" fill="#EDEDED"/><rect x="221" y="517.5" width="4" height="8" fill="#3D8FDB"/><rect x="226.5" y="517.5" width="5" height="8" fill="#fff"/><rect x="227" y="518" width="4" height="1" fill="#3D8FDB"/>
<rect x="249.7" y="515.5" width="13.8" height="11" fill="#0c0c0c" stroke="#bdbdbd" stroke-width=".8"/><path d="M251.5 518 h3" stroke="#ccc" stroke-width=".7"/>
<path d="M291 514.5 L295.5 516.5 L295.5 527 L291 529 L283.5 522.8 L281 524.8 L279.8 524.2 L279.8 519.3 L281 518.7 L283.5 520.7 Z M291 518.3 L287 521.75 L291 525.2 Z M281 520.3 L281 523.2 L282.8 521.75 Z" fill="#9F7AE0" fill-rule="evenodd"/>
<circle cx="318.5" cy="521.5" r="6.3" fill="#F4F4F6"/><circle cx="318.5" cy="521.5" r="5.3" fill="none" stroke="#E56FA6" stroke-width=".9"/><path d="M317 524.5 v-6 l3.5 -1 v5.5" fill="none" stroke="#C74AD4" stroke-width="1"/><circle cx="316.3" cy="524.5" r="1" fill="#C74AD4"/><circle cx="319.8" cy="523.3" r="1" fill="#C74AD4"/>
<path d="M343 518 l9 -1.5 l2 10 l-9 1.5z" fill="none" stroke="#F28C28" stroke-width="1.6"/><path d="M346 516 l6 -1 l1.3 7" fill="none" stroke="#F5C518" stroke-width="1.2"/>
<circle cx="379.5" cy="521.5" r="6.6" fill="#E5603C"/><path d="M379.5 515 a6.5 6.5 0 0 1 6.5 6.5 h-6.5z" fill="#F0A37F"/><rect x="371.5" y="517.5" width="7.5" height="8" fill="#C43E1C"/><text x="373" y="524" font-family="Liberation Sans" font-size="6.5" font-weight="bold" fill="#fff">P</text>
<path d="M800.5 524.5 l4 -4 l4 4" fill="none" stroke="#EDEDED" stroke-width="1"/>
<path d="M819.5 519 h2.5 l1 1.5 h6 v5.5 h-9.5z" fill="#EDEDED"/>
<path d="M843 527 q5 -6 6 -9 M845.5 527 q3 -4 3.5 -6.5 M847.8 527 q1.5 -2 1.5 -3" fill="none" stroke="#D5D5D5" stroke-width=".9"/>
<path d="M858 519.5 h2 l2.5 -2.5 v10 l-2.5 -2.5 h-2z" fill="none" stroke="#EDEDED" stroke-width=".9"/><path d="M864.5 519.5 q1.5 2 0 4.5" fill="none" stroke="#EDEDED" stroke-width=".8"/>
<path d="M924.5 522 h8 v6 h-3 l-2 2 v-2 h-3z" fill="none" stroke="#EDEDED" stroke-width=".9"/>
</svg>
<div class="t u" style="left:877px;top:524px;color:#EDEDED">9/23/2019</div>
<div class="t u" style="left:877.5px;top:511.8px;color:#EDEDED">1:09 PM</div>
<div class="a" style="left:882.5px;top:508.5px;width:15px;height:13px;background:#CFCAD6"></div>
<svg class="a" style="left:882.5px;top:509px" width="15" height="12" viewBox="0 0 15 12"><path d="M10.5 1.5 L13 2.6 L13 9.4 L10.5 10.5 L6 6.9 L4.3 8.2 L3.4 7.8 L3.4 4.2 L4.3 3.8 L6 5.1 Z M10.5 4 L8.2 6 L10.5 8 Z" fill="#7B4FB5" fill-rule="evenodd"/></svg>
<div class="a" style="left:897px;top:508.5px;width:40px;height:13px;background:#6B2C95"></div>
<div class="t" style="left:899.8px;top:512.3px;font-size:6.2px;font-weight:bold;color:#E6DAF0">SUBSCRIBE</div>
</body></html>
